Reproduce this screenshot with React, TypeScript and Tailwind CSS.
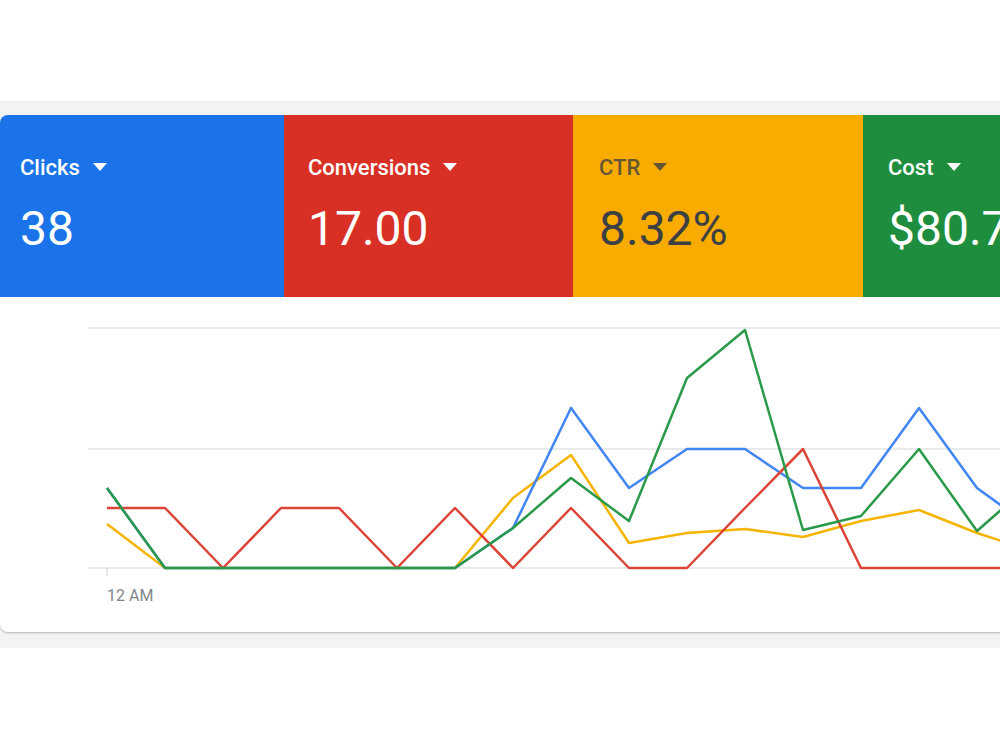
const xs = [107, 165, 223, 281, 339, 397, 455, 513, 571, 629, 687, 745, 803, 861, 919, 977, 1035];

const series = [
  { name: "ctr", color: "#f5b400", ys: [524, 568, 568, 568, 568, 568, 568, 498, 455, 543, 533, 529, 537, 521, 510, 533, 552] },
  { name: "clicks", color: "#4285f4", ys: [488, 568, 568, 568, 568, 568, 568, 528, 408, 488, 449, 449, 488, 488, 408, 488, 530] },
  { name: "conversions", color: "#db4437", ys: [508, 508, 568, 508, 508, 568, 508, 568, 508, 568, 568, 508, 449, 568, 568, 568, 568] },
  { name: "cost", color: "#2a9a4a", ys: [488, 568, 568, 568, 568, 568, 568, 528, 478, 521, 378, 330, 530, 516, 449, 531, 480] },
];

const tiles = [
  { label: "Clicks", value: "38", bg: "bg-[#1a73e8]", text: "text-white", sub: "text-white", w: "w-[284px]", pl: "pl-5" },
  { label: "Conversions", value: "17.00", bg: "bg-[#d93025]", text: "text-white", sub: "text-white", w: "w-[289px]", pl: "pl-6" },
  { label: "CTR", value: "8.32%", bg: "bg-[#f9ab00]", text: "text-[#3c4043]", sub: "text-[#3c4043]/80", w: "w-[290px]", pl: "pl-[26px]" },
  { label: "Cost", value: "$80.74", bg: "bg-[#1e8e3e]", text: "text-white", sub: "text-white", w: "w-[297px]", pl: "pl-[25px]" },
];

const Caret = () => (
  <svg width="16" height="8" viewBox="0 0 16 8" className="fill-current">
    <path d="M1 0h14L8 8z" />
  </svg>
);

const App = () => {
  return (
    <div className="w-[1000px] h-[750px] overflow-hidden bg-white pt-[101px]" style={{ fontFamily: "Roboto, 'Noto Sans', sans-serif" }}>
      <div className="bg-[#f1f3f4] border-t border-[#e6e8eb] pt-[13px] pb-4">
        <div className="w-[1160px] bg-white rounded-lg overflow-hidden shadow-[0_1px_2px_rgba(60,64,67,0.35)]">
          {/* metric tiles */}
          <div className="flex h-[182px]">
            {tiles.map((t) => (
              <div key={t.label} className={`${t.bg} ${t.w} ${t.pl} shrink-0 pt-[38px]`}>
                <div className={`flex items-center gap-3 h-7 text-[22px] font-medium ${t.sub}`}>
                  <span>{t.label}</span>
                  <Caret />
                </div>
                <div className={`mt-6 text-[48px] leading-none ${t.text}`}>{t.value}</div>
              </div>
            ))}
          </div>

          {/* chart */}
          <svg width="1160" height="287" viewBox="0 297 1160 287" className="block">
            {[328, 449, 568].map((y) => (
              <line key={y} x1="88" x2="1160" y1={y} y2={y} stroke="#e2e3e5" strokeWidth="1.5" />
            ))}
            <line x1="107" x2="107" y1="568" y2="576" stroke="#dadce0" strokeWidth="1.5" />
            {series.map((s) => (
              <polyline
                key={s.name}
                points={xs.map((x, i) => `${x},${s.ys[i]}`).join(" ")}
                fill="none"
                stroke={s.color}
                strokeWidth="2.5"
                strokeLinejoin="round"
              />
            ))}
          </svg>
          <div className="h-12 pl-[107px]">
            <span className="text-[16px] leading-5 text-[#80868b]">12 AM</span>
          </div>
        </div>
      </div>
    </div>
  );
};

export default App;
